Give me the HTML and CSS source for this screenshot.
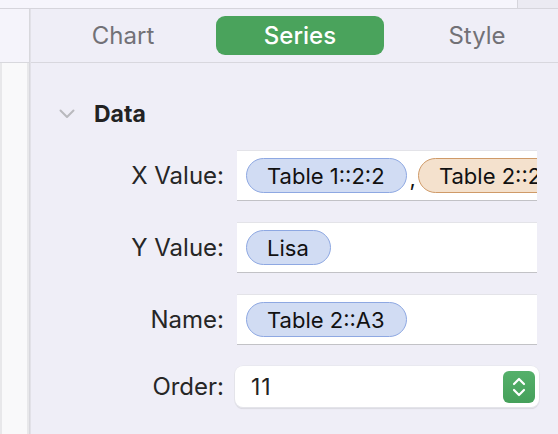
FILE: index.html
```html
<!DOCTYPE html>
<html>
<head>
<meta charset="utf-8">
<link rel="stylesheet" href="styles.css">
</head>
<body>
<div class="topbar">
  <div class="top-left"></div>
  <div class="top-right"></div>
</div>
<div class="main">
  <div class="gutter">
    <div class="gutter-head"></div>
    <div class="gutter-body"><div class="gutter-cell"></div></div>
  </div>
  <div class="panel">
    <div class="tabs">
      <div class="tab">Chart</div>
      <div class="tab active">Series</div>
      <div class="tab">Style</div>
    </div>
    <div class="section">
      <div class="section-head">
        <svg class="chevron" width="16" height="10" viewBox="0 0 16 10"><path d="M1.5 1.5 L8 8 L14.5 1.5" fill="none" stroke="#b9b9be" stroke-width="2" stroke-linecap="round" stroke-linejoin="round"/></svg>
        <span class="section-title">Data</span>
      </div>
      <div class="form">
        <div class="label">X Value:</div>
        <div class="field">
          <span class="pill blue">Table 1::2:2</span><span class="comma">,</span><span class="pill orange">Table 2::2:2</span>
        </div>
        <div class="label">Y Value:</div>
        <div class="field">
          <span class="pill blue">Lisa</span>
        </div>
        <div class="label">Name:</div>
        <div class="field">
          <span class="pill blue">Table 2::A3</span>
        </div>
        <div class="label">Order:</div>
        <div class="stepper-field">
          <span class="num">11</span>
          <span class="stepper">
            <svg width="18" height="24" viewBox="0 0 18 24"><path d="M4 9 L9 4 L14 9 M4 15 L9 20 L14 15" fill="none" stroke="#fff" stroke-width="2.2" stroke-linecap="round" stroke-linejoin="round"/></svg>
          </span>
        </div>
      </div>
    </div>
  </div>
</div>
</body>
</html>
```
FILE: styles.css
```css
* { box-sizing: border-box; }
html, body {
  margin: 0;
  padding: 0;
  width: 558px;
  height: 434px;
  overflow: hidden;
  font-family: Inter, "Noto Sans", "Liberation Sans", sans-serif;
  background: #efeef7;
}
.topbar {
  display: flex;
  height: 9px;
  border-bottom: 1px solid #d6d5dc;
}
.top-left {
  width: 517px;
  flex-shrink: 0;
  background: #f6f5fc;
}
.top-right {
  flex: 1;
  background: #ebeaf2;
  border-left: 1px solid #d6d5dc;
}
.main {
  display: flex;
  height: 425px;
}
.gutter {
  width: 30px;
  flex-shrink: 0;
  display: flex;
  flex-direction: column;
  border-right: 1px solid #d8d8dd;
}
.gutter-head {
  height: 54px;
  background: #f5f4fb;
  border-bottom: 1px solid #d8d8dd;
}
.gutter-body {
  flex: 1;
  background: #e8e8ea;
  padding: 0 2px;
}
.gutter-cell {
  height: 100%;
  background: #f9f9fa;
}
.panel {
  flex: 1;
  min-width: 0;
  overflow: hidden;
  background: #efeef7;
  border-left: 1px solid #e2e1e8;
}
.tabs {
  display: grid;
  grid-template-columns: repeat(3, 168px);
  column-gap: 9px;
  padding: 7px 0 7px 8px;
  height: 54px;
  border-bottom: 1px solid #d8d7de;
}
.tab {
  height: 39px;
  border-radius: 9px;
  display: flex;
  align-items: center;
  justify-content: center;
  font-size: 24px;
  color: #727176;
}
.tab.active {
  background: #4aa35c;
  color: #ffffff;
  font-weight: 500;
}
.section {
  padding-top: 39px;
}
.section-head {
  display: flex;
  align-items: center;
  height: 24px;
  padding-left: 28px;
}
.chevron {
  margin-right: 19px;
}
.section-title {
  font-size: 23px;
  font-weight: 700;
  color: #222;
}
.form {
  display: grid;
  grid-template-columns: 193px 300px;
  column-gap: 13px;
  row-gap: 21px;
  margin-top: 24px;
  align-items: center;
}
.label {
  text-align: right;
  font-size: 24px;
  color: #262626;
}
.field {
  height: 51px;
  background: #fff;
  border-top: 1px solid #e3e3e8;
  border-bottom: 1px solid #c2c2c6;
  display: flex;
  align-items: center;
  padding-left: 9px;
  overflow: hidden;
  white-space: nowrap;
}
.pill {
  display: inline-flex;
  align-items: center;
  height: 35px;
  padding: 0 21px 0 20px;
  border-radius: 18px;
  font-size: 22px;
  color: #111;
  flex-shrink: 0;
}
.pill.blue {
  background: #d1dcf3;
  border: 1.5px solid #8ea8e2;
}
.pill.orange {
  background: #f4e1cd;
  border: 1.5px solid #cf9a68;
}
.comma {
  font-size: 22px;
  color: #111;
  margin: 0 2px 0 3px;
  transform: translateY(2px);
}
.stepper-field {
  height: 41px;
  margin: 0 -2px;
  background: #fff;
  border-radius: 8px;
  box-shadow: 0 0.5px 0 1px #e4e4ea, 0 1.5px 1px rgba(0,0,0,0.12);
  display: flex;
  align-items: center;
  justify-content: space-between;
  padding: 0 4px 0 16px;
}
.num {
  font-size: 23px;
  color: #222;
  letter-spacing: 1px;
}
.stepper {
  width: 32px;
  height: 32px;
  border-radius: 6px;
  background: linear-gradient(#55b06a, #45a05a);
  display: flex;
  align-items: center;
  justify-content: center;
}
```
